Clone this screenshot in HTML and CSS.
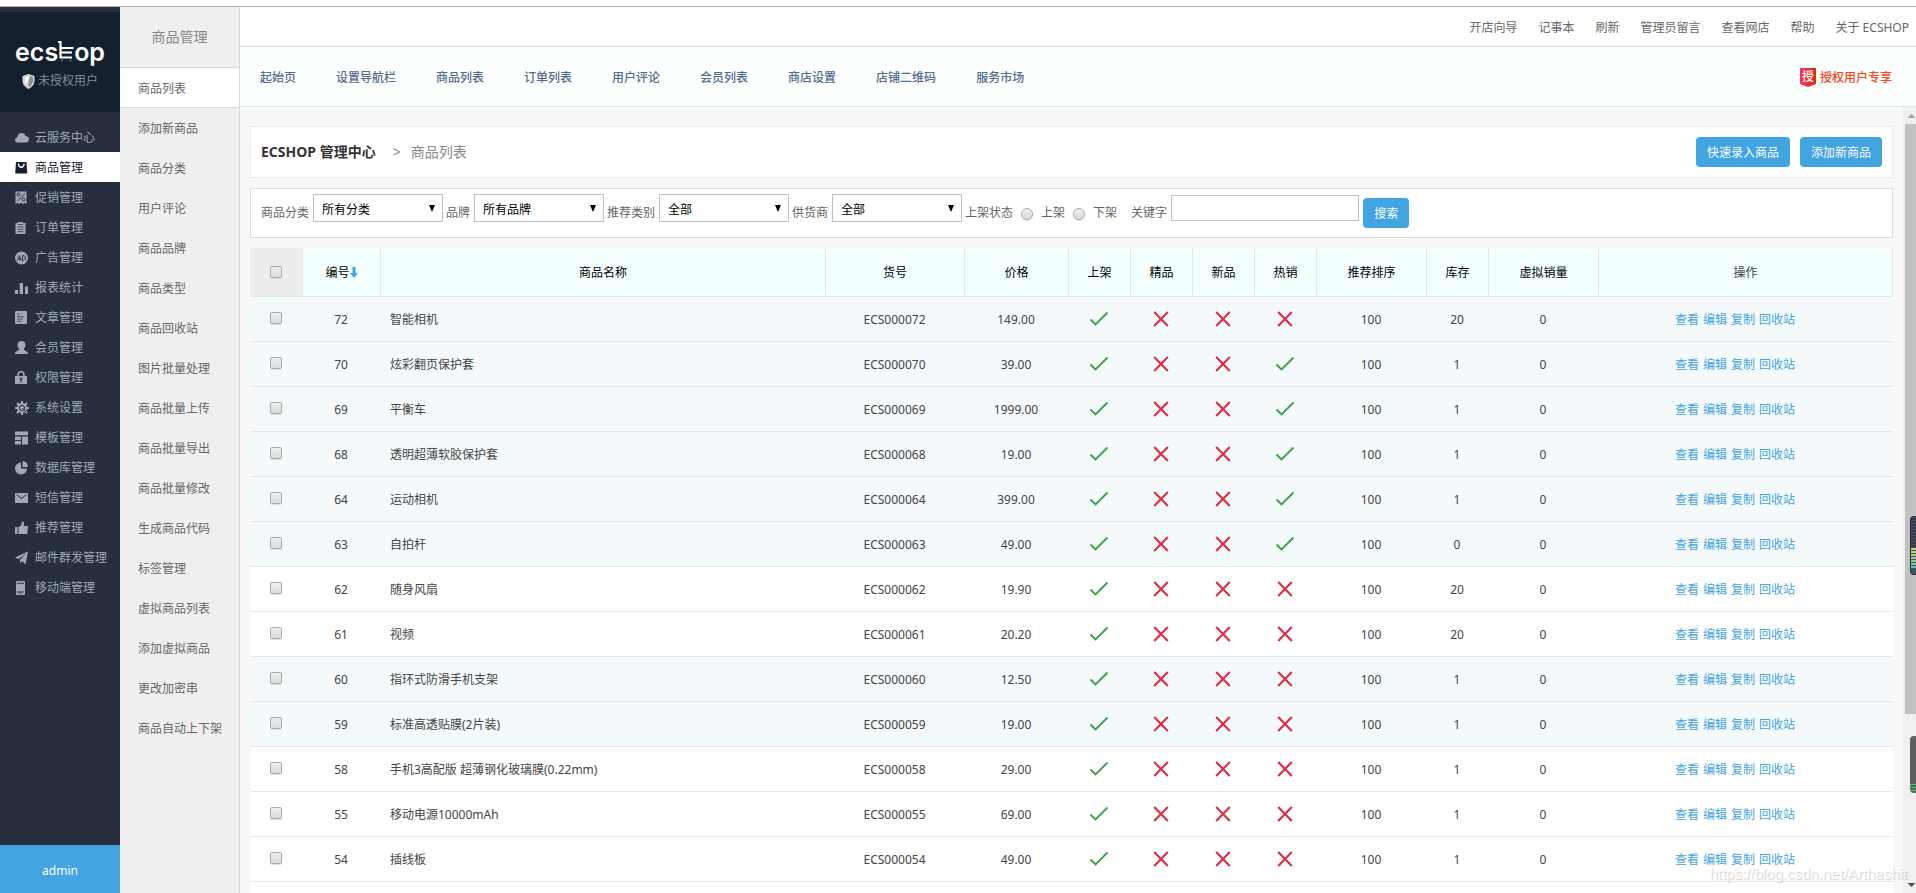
FILE: index.html
```html
<!DOCTYPE html>
<html lang="zh-CN">
<head>
<meta charset="utf-8">
<title>ECSHOP 管理中心 - 商品列表</title>
<link rel="stylesheet" href="styles.css">
</head>
<body>
<svg class="symbols" aria-hidden="true">
  <symbol id="yes" viewBox="0 0 20 16"><path d="M1.5 8.5 L6.5 13.5 L18.5 1.5" fill="none" stroke="#3d9f46" stroke-width="1.8"/></symbol>
  <symbol id="no" viewBox="0 0 16 16"><path d="M1.2 1 L14.8 15 M14.8 1 L1.2 15" fill="none" stroke="#dd2f45" stroke-width="2.2"/></symbol>
</svg>
<div class="app">
  <aside class="sidebar">
    <div class="brand">
      <div class="logo"><span>ecs</span><svg width="16" height="22" viewBox="0 0 16 22"><path d="M0 2 H2.500 V17.500 H14 M3 8 H15.500 M3 12.500 H14" fill="none" stroke="#fff" stroke-width="2.200"/><circle cx="4" cy="20.500" r="1" fill="#6d7681"/><circle cx="12.500" cy="20.500" r="1" fill="#6d7681"/></svg><span>op</span></div>
      <div class="license"><svg width="13" height="15" viewBox="0 0 13 15"><path d="M6.5 0 L12.5 2 V7 C12.5 11 9 13.5 6.5 15 C4 13.500 .5 11 .5 7 V2 Z" fill="#d5d5d5"/><path d="M6.500 1.500 L11 3 V7 C11 10 8.500 12 6.500 13.300 Z" fill="#8d8d8d"/><path d="M3 3 L8 2 L6 8 L3 10 Z" fill="#f7f7f7"/></svg>未授权用户</div>
    </div>
    <nav class="menu">
      <a href="#"><svg viewBox="0 0 14 14"><path d="M3 11.500 C1 11.500 0 10.300 0 8.900 C0 7.500 1 6.600 2.200 6.500 C2.400 4 4.200 2 6.500 2 C8.400 2 9.900 3.200 10.500 5 C12.600 5 14 6.500 14 8.300 C14 10.100 12.700 11.500 11 11.500 Z"/></svg>云服务中心</a>
      <a href="#" class="active"><svg viewBox="0 0 14 14"><path fill-rule="evenodd" d="M1 1 H11.500 L12.300 12.500 H0.200 Z M2.700 2.500 C3 8.500 9.500 8.500 9.800 2.500 H8.600 C8.300 6.500 4.200 6.500 3.900 2.500 Z"/></svg>商品管理</a>
      <a href="#"><svg viewBox="0 0 14 14"><path d="M0.500 0.500 H11.500 V13 L9.500 11.800 L8 13 L6 11.800 L4 13 L2.500 11.800 L0.500 13 Z"/><path d="M2.500 10 L10 2.500" class="cut"/><circle cx="3.500" cy="3.500" r="1.500" class="cut"/><circle cx="8.500" cy="8.500" r="1.500" class="cut"/></svg>促销管理</a>
      <a href="#"><svg viewBox="0 0 14 14"><path d="M0.500 2 H3 V1 H8 V2 H10.500 V13 H0.500 Z"/><path d="M3 3.500 H8 M2.500 6 H8.500 M2.500 8.300 H8.500 M2.500 10.600 H8.500" class="cut thin"/></svg>订单管理</a>
      <a href="#"><svg viewBox="0 0 14 14"><circle cx="6.500" cy="7" r="6.500"/><path d="M2.500 9.700 L4.400 4.500 L6 9.700 M3.300 8 H5.600 M7.500 4.600 V9.400 H8.700 C11 9.400 11 4.600 8.700 4.600 Z" class="cut"/></svg>广告管理</a>
      <a href="#"><svg viewBox="0 0 14 14"><path d="M0 9 H3 V13 H0 Z M4.700 2 H8 V13 H4.700 Z M10 5.500 H13 V13 H10 Z"/></svg>报表统计</a>
      <a href="#"><svg viewBox="0 0 14 14"><rect width="12" height="13" rx="1"/><path d="M2 3 H5 M2 5.700 H9 M2 8 H8 M2 10.300 H6" class="cut thin"/></svg>文章管理</a>
      <a href="#"><svg viewBox="0 0 14 14"><path d="M6.500 0 C9 0 10.800 1.800 10.500 4.500 C10.300 6.300 9.300 7.300 8.600 8.300 C9 10 13 9.500 13 13 H0 C0 9.500 4 10 4.400 8.300 C3.700 7.300 2.700 6.300 2.500 4.500 C2.200 1.800 4 0 6.500 0 Z"/></svg>会员管理</a>
      <a href="#"><svg viewBox="0 0 14 14"><rect y="5" width="12" height="8"/><path d="M3 5 V4 C3 -0.300 9 -0.300 9 4 V5" fill="none" stroke="#9fa9b6" stroke-width="1.600"/><path d="M6 7 V11.500" class="cut"/><circle cx="6" cy="7.800" r="1" class="cut"/></svg>权限管理</a>
      <a href="#"><svg viewBox="0 0 14 14"><circle cx="7" cy="7" r="5"/><path d="M7 0 V14 M0 7 H14 M2 2 L12 12 M12 2 L2 12" fill="none" stroke="#9fa9b6" stroke-width="2.200"/><circle cx="7" cy="7" r="2.600" class="cut"/><path d="M7 7 L11 11" class="cut"/></svg>系统设置</a>
      <a href="#"><svg viewBox="0 0 14 14"><path d="M0 0.500 H13 V4.300 H0 Z M0 5.500 H6 V9 H0 Z M0 10 H6 V13.500 H0 Z M7 5.500 H13 V13.500 H7 Z"/></svg>模板管理</a>
      <a href="#"><svg viewBox="0 0 14 14"><path d="M6 1.500 V7.500 H12 A6 6 0 1 1 6 1.500 Z M7.500 0 A5.700 5.700 0 0 1 13 6 H7.500 Z"/></svg>数据库管理</a>
      <a href="#"><svg viewBox="0 0 14 14"><rect y="2" width="13" height="10"/><path d="M1.500 3.500 L6.500 7.500 L11.500 3.500" class="cut"/></svg>短信管理</a>
      <a href="#"><svg viewBox="0 0 14 14"><path d="M0 6 H2.500 V13 H0 Z M3.500 6 L6 4.500 L7 0.500 C9 0 9.500 2 8.700 5 H13 L12.300 13 H3.500 Z"/></svg>推荐管理</a>
      <a href="#"><svg viewBox="0 0 14 14"><path d="M13 0.500 L10.500 13.500 L7 10 L5 12.500 V9 L11 2.800 L3.700 8 L0 6.500 Z"/></svg>邮件群发管理</a>
      <a href="#"><svg viewBox="0 0 14 14"><rect x="1" width="9" height="14" rx="1"/><path d="M2 2.200 H9 M2 11 H9 M4.800 12.600 H6.200" class="cut"/></svg>移动端管理</a>
    </nav>
    <a href="#" class="admin">admin</a>
  </aside>

  <aside class="submenu">
    <h2>商品管理</h2>
    <nav>
      <a href="#" class="active">商品列表</a>
      <a href="#">添加新商品</a>
      <a href="#">商品分类</a>
      <a href="#">用户评论</a>
      <a href="#">商品品牌</a>
      <a href="#">商品类型</a>
      <a href="#">商品回收站</a>
      <a href="#">图片批量处理</a>
      <a href="#">商品批量上传</a>
      <a href="#">商品批量导出</a>
      <a href="#">商品批量修改</a>
      <a href="#">生成商品代码</a>
      <a href="#">标签管理</a>
      <a href="#">虚拟商品列表</a>
      <a href="#">添加虚拟商品</a>
      <a href="#">更改加密串</a>
      <a href="#">商品自动上下架</a>
    </nav>
  </aside>

  <div class="main">
    <header class="topbar">
      <a href="#">开店向导</a><a href="#">记事本</a><a href="#">刷新</a><a href="#">管理员留言</a><a href="#">查看网店</a><a href="#">帮助</a><a href="#">关于 ECSHOP</a>
    </header>
    <nav class="nav">
      <a href="#">起始页</a><a href="#">设置导航栏</a><a href="#">商品列表</a><a href="#">订单列表</a><a href="#">用户评论</a><a href="#">会员列表</a><a href="#">商店设置</a><a href="#">店铺二维码</a><a href="#">服务市场</a>
      <a href="#" class="vip"><span class="badge">授</span>授权用户专享</a>
    </nav>
    <div class="frame">
      <main class="content">
        <section class="title">
          <h1>ECSHOP 管理中心</h1><span class="sep">&gt;</span><span class="here">商品列表</span>
          <button type="button" class="btn first">快速录入商品</button>
          <button type="button" class="btn">添加新商品</button>
        </section>
        <form class="filter">
          <label for="cat">商品分类</label><span class="pick"><select id="cat"><option>所有分类</option></select></span>
          <label for="brand">品牌</label><span class="pick"><select id="brand"><option>所有品牌</option></select></span>
          <label for="type">推荐类别</label><span class="pick"><select id="type"><option>全部</option></select></span>
          <label for="supplier">供货商</label><span class="pick"><select id="supplier"><option>全部</option></select></span>
          <span>上架状态</span>
          <label class="radio"><input type="radio" name="sale">上架</label>
          <label class="radio"><input type="radio" name="sale">下架</label>
          <label for="kw" class="kw">关键字</label><input type="text" id="kw">
          <button type="button" class="btn">搜索</button>
        </form>
        <table class="goods">
          <colgroup><col class="c-check"><col class="c-id"><col><col class="c-sn"><col class="c-price"><col class="c-flag"><col class="c-flag"><col class="c-flag"><col class="c-flag"><col class="c-wide"><col class="c-flag"><col class="c-wide"><col class="c-ops"></colgroup>
          <thead>
            <tr><th><input type="checkbox" aria-label="全选"></th><th>编号<svg class="sort" width="8" height="11" viewBox="0 0 8 11"><path d="M2.500 0 H5.500 V6 H8 L4 11 L0 6 H2.500 Z" fill="#42a4e0"/></svg></th><th>商品名称</th><th>货号</th><th>价格</th><th>上架</th><th>精品</th><th>新品</th><th>热销</th><th>推荐排序</th><th>库存</th><th>虚拟销量</th><th class="ops-head">操作</th></tr>
          </thead>
          <tbody id="rows"></tbody>
        </table>
      </main>
      <div class="scrollbar">
        <svg width="13" height="17" viewBox="0 0 13 17"><path d="M4.500 11 H12.500 L8.500 7 Z" fill="#a3a3a3"/></svg>
        <div class="thumb"></div>
        <svg width="13" height="17" viewBox="0 0 13 17"><path d="M4.500 7 H12.500 L8.500 11 Z" fill="#505050"/></svg>
      </div>
    </div>
  </div>
</div>
<div class="gauge gauge-dark"></div>
<div class="gauge gauge-gray"></div>
<div class="watermark">https://blog.csdn.net/Arthashit</div>
<script src="rows.js"></script>
</body>
</html>
```

FILE: styles.css
```css
* { box-sizing: border-box; }

body {
  margin: 0;
  overflow: hidden;
  background: #fff;
  color: #666;
  font: 12px/20px "Noto Sans", "Noto Sans CJK SC", sans-serif;
}

a { color: inherit; text-decoration: none; }
h1, h2 { margin: 0; }
button, input, select { font: inherit; }
.symbols { position: absolute; width: 0; height: 0; }

.app {
  display: flex;
  height: 100vh;
  margin-top: 6px;
  padding-bottom: 6px;
  border-top: 1px solid #b3b3b3;
}

/* dark sidebar */
.sidebar {
  display: flex;
  flex-direction: column;
  flex: none;
  width: 120px;
  padding-top: 5px;
  background: #272f3e;
}

.brand {
  height: 100px;
  padding-top: 24px;
  background: #15202e;
}

.logo {
  display: flex;
  justify-content: center;
  height: 32px;
  color: #fff;
  font: 600 25px/32px Inter, "Liberation Sans", sans-serif;
}
.logo svg { margin-top: 4px; }

.license {
  display: flex;
  align-items: center;
  justify-content: center;
  gap: 3px;
  margin-top: 3px;
  height: 20px;
  color: #858b94;
}

.menu { flex: 1; padding-top: 10px; }
.menu a {
  display: flex;
  align-items: center;
  gap: 6px;
  height: 30px;
  padding: 2px 0 0 15px;
  color: #9fa9b6;
}
.menu svg { width: 14px; height: 14px; margin-bottom: 1px; fill: #9fa9b6; }
.menu .cut { fill: none; stroke: #272f3e; stroke-width: 1; }
.menu .thin { stroke-opacity: .7; }
.menu .active { background: #fff; color: #15202e; }
.menu .active svg { fill: #15202e; }

.admin {
  height: 48px;
  background: #42a4e0;
  color: #fff;
  line-height: 52px;
  text-align: center;
}

/* second-level menu */
.submenu {
  flex: none;
  width: 120px;
  border-right: 1px solid #d9d9d9;
  background: #efefef;
}
.submenu h2 {
  height: 60px;
  color: #888;
  font-size: 14px;
  font-weight: 400;
  line-height: 60px;
  text-align: center;
}
.submenu a {
  display: block;
  height: 40px;
  padding-left: 18px;
  line-height: 42px;
}
.submenu .active {
  height: 41px;
  border: solid #d9d9d9;
  border-width: 1px 0;
  background: #fff;
}

/* right side */
.main {
  display: flex;
  flex: 1;
  flex-direction: column;
  min-width: 0;
}

.topbar {
  display: flex;
  align-items: center;
  justify-content: flex-end;
  gap: 21px;
  flex: none;
  height: 40px;
  padding: 2px 7px 0 0;
  border-bottom: 1px solid #d9d9d9;
}

.nav {
  display: flex;
  align-items: center;
  gap: 40px;
  flex: none;
  height: 60px;
  padding: 2px 24px 0 20px;
  border-bottom: 1px solid #e6e8e8;
  background: #fbfffe;
  color: #566a8c;
  font-weight: 500;
}
.vip {
  display: flex;
  align-items: center;
  gap: 4px;
  margin-left: auto;
  color: #ff4417;
}
.badge {
  width: 16px;
  height: 19px;
  background: linear-gradient(90deg, #f8385a, #e02a08);
  clip-path: polygon(0 0, 100% 0, 100% 84%, 50% 100%, 0 84%);
  color: #fff;
  line-height: 17px;
  text-align: center;
}

.frame { display: flex; flex: 1; min-height: 0; background: #f8f8f8; }
.content {
  flex: 1;
  min-width: 0;
  padding: 19px 10px 0;
  overflow: hidden;
}

.title {
  display: flex;
  align-items: center;
  height: 52px;
  padding: 0 10px;
  border: 1px solid #ececec;
  background: #fff;
  font-size: 14px;
}
.title h1 { color: #333; font-size: 14px; }
.sep { margin: 0 10px 0 17px; color: #888; }
.here { color: #888; }
.first { margin: 0 10px 0 auto; }

.btn {
  height: 30px;
  padding: 2px 11px 0;
  border: 0;
  border-radius: 4px;
  background: #42a4e0;
  color: #fff;
  font-size: 12px;
}

.filter {
  display: flex;
  align-items: center;
  gap: 4px;
  height: 50px;
  margin: 10px 0;
  padding-left: 10px;
  border: 1px solid #dcdcdc;
  background: #fff;
}
.pick { position: relative; width: 129px; margin-bottom: 10px; }
.pick::after {
  position: absolute;
  top: 11px;
  right: 7px;
  border: solid transparent;
  border-width: 7px 3px 0;
  border-top-color: #000;
  content: "";
}
.filter select {
  display: block;
  width: 130px;
  height: 28px;
  padding: 4px 8px 0;
  border: 1px solid #b9c2ca;
  border-radius: 0;
  background: #fff;
  color: #000;
  appearance: none;
}
.radio { display: flex; align-items: center; gap: 8px; margin-left: 4px; }
.kw { margin-left: 10px; }
.filter input[type="text"] {
  width: 188px;
  height: 26px;
  margin-bottom: 10px;
  border: 1px solid #b9c2ca;
}

input[type="radio"], input[type="checkbox"] {
  width: 12px;
  height: 12px;
  margin: 0;
  border: 1px solid #aaa;
  border-radius: 2px;
  background: linear-gradient(#eee, #dcdcdc);
  box-shadow: 0 1px 1px #ddd;
  appearance: none;
}
input[type="radio"] { margin-top: 2px; border-radius: 50%; }

/* goods table */
.goods {
  width: 100%;
  border-collapse: separate;
  border-spacing: 0;
  table-layout: fixed;
  background: #fff;
  color: #444;
  text-align: center;
}
.c-check { width: 53px; }
.c-id { width: 78px; }
.c-sn { width: 139px; }
.c-price { width: 104px; }
.c-flag { width: 62px; }
.c-wide { width: 110px; }
.c-ops { width: 294px; }

.goods th {
  height: 49px;
  padding: 2px 0 0;
  border: solid #e6e6e6;
  border-width: 0 1px 1px 0;
  background: #f2fffe;
  color: #000;
  font-weight: 400;
}
.goods th:first-child { padding: 0; background: #ededed; }
.goods .ops-head { color: #444; }
.goods td {
  height: 45px;
  padding: 2px 2px 0 0;
  border-bottom: 1px solid #e6e6e6;
}
.goods td:first-child { padding: 0 2px 2px 0; }
.goods .tint { background: #f4fafc; }
.goods .name { padding-left: 9px; text-align: left; }
.goods input { display: block; margin: 0 auto; }
.goods svg { display: block; margin: 0 auto 3px; }
.goods th .sort { display: inline-block; margin: 0; vertical-align: -1px; }
.ops { display: flex; justify-content: center; gap: 4px; padding-right: 20px; color: #42a4e0; }

/* scrollbar column */
.scrollbar {
  display: flex;
  flex: none;
  flex-direction: column;
  width: 13px;
  background: #f0f0f0;
}
.scrollbar svg { flex: none; }
.thumb { height: 75%; margin: 0 0 auto 2px; background: #c1c1c1; }

/* overlays on the window edge */
.gauge { position: absolute; right: 0; width: 6px; border-radius: 4px 0 0 4px; }
.gauge-dark {
  top: 516px;
  height: 59px;
  border: solid #2b2f3d;
  border-width: 1px 0 1px 1px;
  background:
    repeating-linear-gradient(#4b5060 0 1px, transparent 1px 3px),
    linear-gradient(#343949 30px, #d8d860 30px, #58c8b0 51px, #4b5060 51px);
}
.gauge-gray {
  top: 736px;
  height: 57px;
  background: repeating-linear-gradient(#3bd45a 0 1px, #5f5f5f 1px 3px) 0 48px / 100% 8px no-repeat #5f5f5f;
}
.watermark {
  position: absolute;
  right: 9px;
  bottom: 9px;
  color: rgba(255, 255, 255, .8);
  font: 15px/20px "Liberation Sans", Arial, sans-serif;
  text-shadow: 1px 1px 1px rgba(0, 0, 0, .2);
}
```

FILE: rows.js
```js
// id, name, price, hot, stock, tinted
const goods = [
  [72, "智能相机", "149.00", 0, 20, 1],
  [70, "炫彩翻页保护套", "39.00", 1, 1, 1],
  [69, "平衡车", "1999.00", 1, 1, 1],
  [68, "透明超薄软胶保护套", "19.00", 1, 1, 1],
  [64, "运动相机", "399.00", 1, 1, 1],
  [63, "自拍杆", "49.00", 1, 0, 1],
  [62, "随身风扇", "19.90", 0, 20, 0],
  [61, "视频", "20.20", 0, 20, 0],
  [60, "指环式防滑手机支架", "12.50", 0, 1, 1],
  [59, "标准高透贴膜(2片装)", "19.00", 0, 1, 1],
  [58, "手机3高配版 超薄钢化玻璃膜(0.22mm)", "29.00", 0, 1, 0],
  [55, "移动电源10000mAh", "69.00", 0, 1, 0],
  [54, "插线板", "49.00", 0, 1, 0]
];
const flag = on => on
  ? '<svg width="20" height="16"><use href="#yes"/></svg>'
  : '<svg width="16" height="16"><use href="#no"/></svg>';

document.getElementById("rows").innerHTML = goods.map(([id, name, price, hot, stock, tint]) => `
  <tr class="${tint ? "tint" : ""}">
    <td><input type="checkbox" aria-label="${name}"></td>
    <td>${id}</td><td class="name">${name}</td><td>ECS0000${id}</td><td>${price}</td>
    <td>${flag(1)}</td><td>${flag(0)}</td><td>${flag(0)}</td><td>${flag(hot)}</td>
    <td>100</td><td>${stock}</td><td>0</td>
    <td><div class="ops"><a href="#">查看</a><a href="#">编辑</a><a href="#">复制</a><a href="#">回收站</a></div></td>
  </tr>`).join("") + '<tr><td colspan="13"></td></tr>';
```
